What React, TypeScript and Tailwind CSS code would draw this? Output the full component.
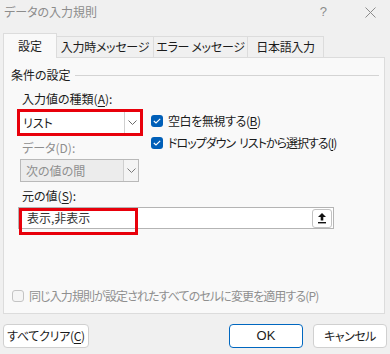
import React from "react";

const palt = "[font-feature-settings:'palt']";

function Chevron({ color = "#6b6b6b" }: { color?: string }) {
  return (
    <svg width="9" height="5" viewBox="0 0 9 5" fill="none">
      <polyline points="0.5,0.5 4.5,4.5 8.5,0.5" stroke={color} strokeWidth="1" />
    </svg>
  );
}

function CheckBox({ checked, disabled }: { checked?: boolean; disabled?: boolean }) {
  if (checked) {
    return (
      <div className="w-[12px] h-[12px] rounded-[3px] bg-[#005fb8] flex items-center justify-center shrink-0">
        <svg width="8" height="6" viewBox="0 0 8 6" fill="none">
          <polyline points="0.8,3 3,5 7.2,0.8" stroke="#ffffff" strokeWidth="1.1" />
        </svg>
      </div>
    );
  }
  return (
    <div
      className={`w-[12px] h-[12px] rounded-[3px] border shrink-0 ${
        disabled ? "border-[#c4c4c4] bg-[#f5f5f5]" : "border-[#8a8a8a] bg-white"
      }`}
    />
  );
}

const tabs = [
  { label: "設定", w: "w-[54px]", active: true },
  { label: "入力時メッセージ", w: "w-[97px]" },
  { label: "エラー メッセージ", w: "w-[94px]" },
  { label: "日本語入力", w: "w-[76px]" },
];

export default function App() {
  return (
    <div
      className={`w-[390px] h-[354px] bg-[#f0f0f0] flex flex-col text-[12px] text-[#1b1b1b] font-['Noto_Sans_CJK_JP',sans-serif] ${palt} overflow-hidden`}
    >
      {/* Title bar */}
      <div className="h-[24px] flex items-center pl-[4px] text-[#8c8c8c]">
        <span className="text-[12px] leading-[16px]">データの入力規則</span>
        <span className="ml-auto mr-[38px] text-[13px] font-['Liberation_Sans',sans-serif]">?</span>
        <svg className="mr-[14px]" width="11" height="11" viewBox="0 0 11 11" fill="none">
          <line x1="0.5" y1="0.5" x2="10.5" y2="10.5" stroke="#8c8c8c" strokeWidth="1" />
          <line x1="10.5" y1="0.5" x2="0.5" y2="10.5" stroke="#8c8c8c" strokeWidth="1" />
        </svg>
      </div>

      {/* Tabs */}
      <div className="mt-[9px] h-[24px] pl-[3px] flex items-end relative z-10">
        {tabs.map((t) =>
          t.active ? (
            <div
              key={t.label}
              className={`${t.w} h-[25px] mb-[-1px] bg-[#f9f9f9] border border-b-0 border-[#dcdcdc] flex items-center justify-center leading-[16px]`}
            >
              {t.label}
            </div>
          ) : (
            <div
              key={t.label}
              className={`${t.w} h-[21px] bg-[#f0f0f0] border-t border-r border-[#dcdcdc] flex items-center justify-center leading-[16px] tracking-[-0.3px]`}
            >
              {t.label}
            </div>
          )
        )}
      </div>

      {/* Panel */}
      <div className="ml-[3px] w-[382px] h-[257px] bg-[#f9f9f9] border border-[#dcdcdc] flex flex-col">
        <div className="pt-[9px] pl-[7px] pr-[5px] flex items-center h-[25px]">
          <span className="leading-[16px]">条件の設定</span>
          <div className="flex-1 ml-[4px] h-px bg-[#d4d4d4]" />
        </div>

        <div className="pl-[18px] mt-[8px] leading-[16px]">
          入力値の種類(<span className="underline underline-offset-2">A</span>):
        </div>

        <div className="flex mt-[2px] pl-[13px]">
          {/* left column */}
          <div className="w-[126px] flex flex-col">
            <div className="h-[27px] border-[3px] border-[#e8000b] bg-white flex">
              <div className="flex-1 flex items-center pl-[3px] leading-[16px]">リスト</div>
              <div className="w-[16px] border-l border-[#d0d0d0] flex items-center justify-center">
                <Chevron />
              </div>
            </div>
            <div className="mt-[4px] pl-[5px] leading-[16px] text-[#8f8f8f]">データ(D):</div>
            <div className="mt-[3px] ml-[3px] w-[119px] h-[23px] border border-[#b9b9b9] bg-[#ececec] flex">
              <div className="flex-1 flex items-center pl-[5px] leading-[16px] text-[#8f8f8f]">次の値の間</div>
              <div className="w-[15px] border-l border-[#cfcfcf] bg-[#f4f4f4] flex items-center justify-center">
                <Chevron color="#7a7a7a" />
              </div>
            </div>
          </div>

          {/* right column */}
          <div className="ml-[8px] pt-[4px] flex flex-col gap-[6px]">
            <div className="flex items-center h-[16px] gap-[5px]">
              <CheckBox checked />
              <span className="leading-[16px] tracking-[-0.4px]">
                空白を無視する(<span className="underline underline-offset-2">B</span>)
              </span>
            </div>
            <div className="flex items-center h-[16px] gap-[5px]">
              <CheckBox checked />
              <span className="leading-[16px] tracking-[-1px]">
                ドロップダウン<span className="ml-[4px]">リストから選択する(</span>
                <span className="underline underline-offset-2">I</span>)
              </span>
            </div>
          </div>
        </div>

        <div className="pl-[18px] mt-[6px] leading-[16px]">
          元の値(<span className="underline underline-offset-2">S</span>):
        </div>

        <div className="relative mt-[3px] ml-[14px] w-[316px] h-[22px] border border-[#b4b4b4] bg-white flex items-center">
          <span className="pl-[8px] leading-[16px] text-[#333333]">表示,非表示</span>
          <div className="ml-auto mr-[1px] w-[20px] h-[19px] rounded-[3px] border border-[#c2c2c2] bg-white flex items-center justify-center">
            <svg width="10" height="12" viewBox="0 0 10 12" fill="none">
              <path d="M5 1 L9 5 L6.3 5 L6.3 8.5 L3.7 8.5 L3.7 5 L1 5 Z" fill="#111111" />
              <rect x="1" y="10" width="8" height="1.4" fill="#111111" />
            </svg>
          </div>
          {/* annotation */}
          <div className="absolute left-0 top-0 w-[119px] h-[27px] border-[3px] border-[#e8000b]" />
        </div>

        <div className="mt-auto mb-[9px] pl-[8px] flex items-center h-[16px] gap-[5px] text-[#8f8f8f]">
          <CheckBox disabled />
          <span className="leading-[16px] tracking-[-0.9px]">同じ入力規則が設定されたすべてのセルに変更を適用する(P)</span>
        </div>
      </div>

      {/* Buttons */}
      <div className="mt-[10px] flex items-center pl-[3px]">
        <button className="w-[86px] h-[24px] rounded-[4px] border border-[#d0d0d0] bg-white leading-[16px] tracking-[-0.3px]">
          すべてクリア(<span className="underline underline-offset-2">C</span>)
        </button>
        <button className="ml-[140px] w-[74px] h-[24px] rounded-[4px] border border-[#0067c0] bg-white leading-[16px] font-['Liberation_Sans',sans-serif] text-[13px]">
          OK
        </button>
        <button className="ml-[10px] w-[74px] h-[24px] rounded-[4px] border border-[#d0d0d0] bg-white leading-[16px] tracking-[-0.5px]">
          キャンセル
        </button>
      </div>
    </div>
  );
}
